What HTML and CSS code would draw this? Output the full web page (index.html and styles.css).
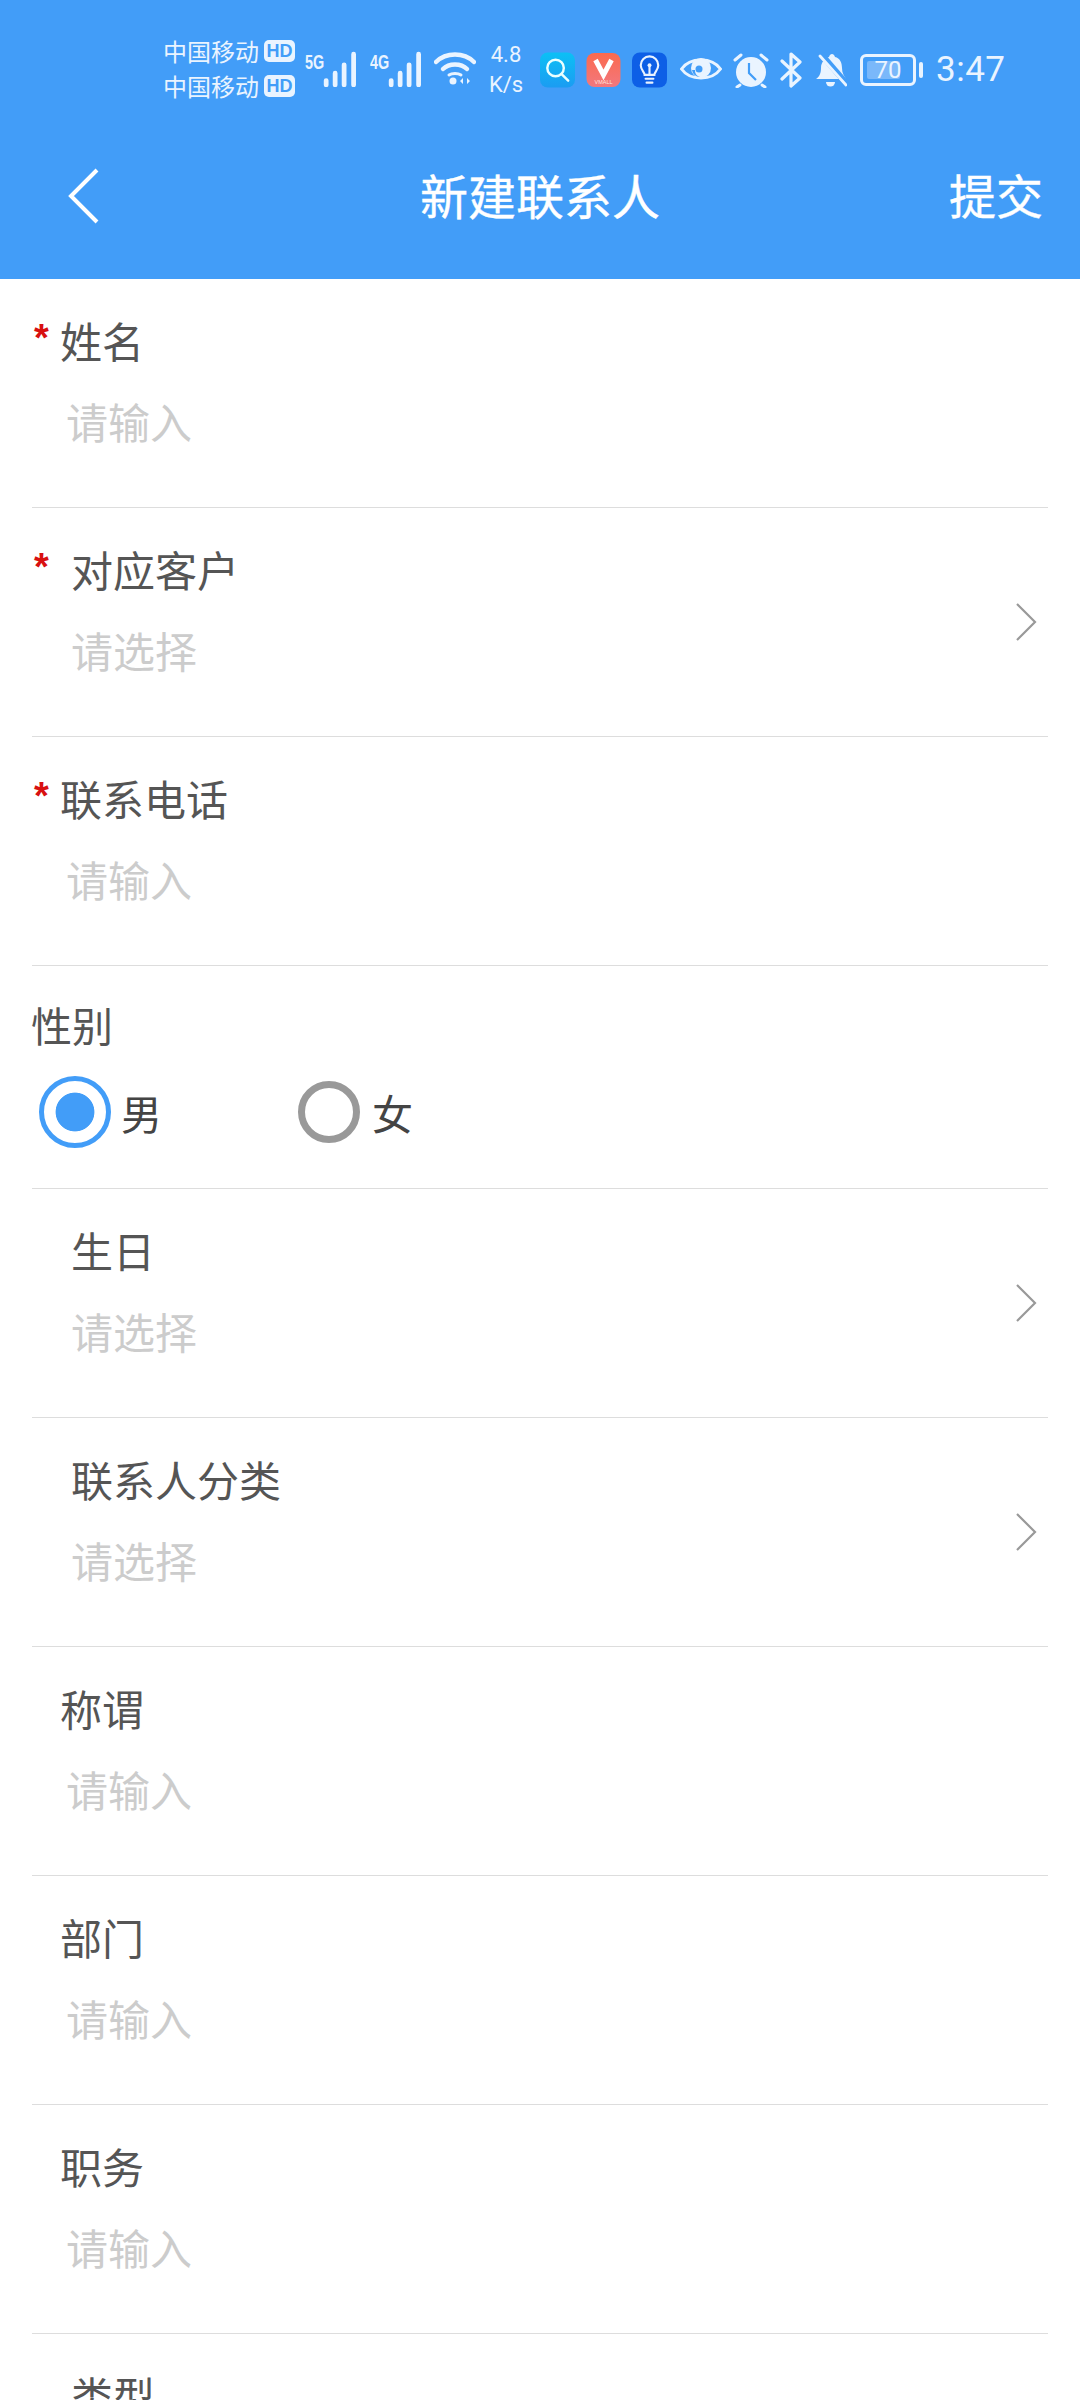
FILE: index.html
```html
<!DOCTYPE html>
<html lang="zh-CN">
<head>
<meta charset="utf-8">
<title>新建联系人</title>
<link rel="stylesheet" href="styles.css">
</head>
<body>
<div class="page">
  <header class="header">
    <div class="status">
      <div class="carriers">
        <div class="carrier"><span>中国移动</span><b class="hd">HD</b></div>
        <div class="carrier"><span>中国移动</span><b class="hd">HD</b></div>
      </div>
      <div class="signal">
        <span class="gen">5G</span>
        <svg class="bars" viewBox="0 0 36 34"><path d="M3 28v4M11.500 21v11M20 13v19M29 3v29" fill="none" stroke="#eaf4ff" stroke-width="4.500" stroke-linecap="round"/></svg>
      </div>
      <div class="signal two">
        <span class="gen">4G</span>
        <svg class="bars" viewBox="0 0 36 34"><path d="M3 28v4M11.500 21v11M20 13v19M29 3v29" fill="none" stroke="#eaf4ff" stroke-width="4.500" stroke-linecap="round"/></svg>
      </div>
      <svg class="wifi" viewBox="0 0 42 34"><g fill="none" stroke="#eaf4ff" stroke-width="4.500" stroke-linecap="round"><path d="M2 11C12 1 30 1 40 11"/><path d="M9 18C15 12 27 12 33 18"/><path d="M15 24c3-2 9-2 12 0" stroke-width="3"/></g><circle cx="19" cy="30" r="3.500" fill="#eaf4ff"/><path d="M29 27v6l-3-3zM33 27v6l3-3z" fill="#eaf4ff"/></svg>
      <div class="speed"><span>4.8</span><span>K/s</span></div>
      <svg class="app first" viewBox="0 0 36 36"><defs><linearGradient id="a1" x1="0" y1="0" x2="0" y2="1"><stop offset="0" stop-color="#0cc0f5"/><stop offset="1" stop-color="#1b9cf2"/></linearGradient></defs><rect width="36" height="36" rx="8" fill="url(#a1)"/><circle cx="16" cy="16" r="8.500" fill="none" stroke="#eaffff" stroke-width="2.500"/><path d="M22 22l7 7" stroke="#eaffff" stroke-width="2.500" stroke-linecap="round"/></svg>
      <svg class="app" viewBox="0 0 34 36"><defs><linearGradient id="a2" x1="0" y1="0" x2="0" y2="1"><stop offset="0" stop-color="#fb6a4e"/><stop offset="1" stop-color="#f2787e"/></linearGradient></defs><rect width="34" height="34" y="1" rx="8" fill="url(#a2)"/><path d="M9 8l8 15 8-15" fill="none" stroke="#fff" stroke-width="5"/><text class="vmall" x="17" y="32" text-anchor="middle">VMALL</text></svg>
      <svg class="app" viewBox="0 0 36 36"><rect width="36" height="36" rx="8" fill="#0d5fe6"/><path d="M13 23c0-3-4-5-4-10a9 9 0 0 1 18 0c0 5-4 7-4 10z" fill="none" stroke="#e8f2ff" stroke-width="2.200"/><path d="M14 27h8M15 31h6M18 23v-9" stroke="#e8f2ff" stroke-width="2.200" stroke-linecap="round"/><circle cx="18" cy="13" r="2" fill="#e8f2ff"/></svg>
      <svg class="eye" viewBox="0 0 42 28"><path d="M1.500 14C10 2 32 2 40.500 14 32 26 10 26 1.500 14z" fill="none" stroke="#eaf4ff" stroke-width="3"/><circle cx="21" cy="13" r="10" fill="#eaf4ff"/><path d="M12 15a8 8 0 0 0 8 7c-3-1-5-3-5-7z" fill="#429df8"/><circle cx="19" cy="14" r="3.500" fill="#429df8"/></svg>
      <svg class="alarm" viewBox="0 0 36 36"><circle cx="18" cy="20" r="15" fill="#eaf4ff"/><path d="M2 8l6-5M34 8l-6-5M7 33l-3 2M29 33l3 2" stroke="#eaf4ff" stroke-width="3" stroke-linecap="round"/><path d="M16 11v10l7 7" fill="none" stroke="#429df8" stroke-width="2.200"/></svg>
      <svg class="bt" viewBox="0 0 22 36"><path d="M2 9l18 17-9 8V2l9 8L2 27" fill="none" stroke="#eaf4ff" stroke-width="3.200" stroke-linejoin="round" stroke-linecap="round"/></svg>
      <svg class="bell" viewBox="0 0 32 36"><path d="M1 27c3-2 5-5 5-11 0-6 4-10 8-11 1-4 5-4 6 0 5 1 7 6 7 11 0 5 2 8 4 11z" fill="#eaf4ff"/><path d="M11 30h9a4.500 4.500 0 0 1-9 0z" fill="#eaf4ff"/><path d="M6 2l26 30" stroke="#429df8" stroke-width="6"/><path d="M5 4l26 29" stroke="#eaf4ff" stroke-width="2.800" stroke-linecap="round"/></svg>
      <div class="battery-wrap">
        <div class="battery"><i class="level"></i><span>70</span></div>
        <i class="cap"></i>
      </div>
      <div class="time">3:47</div>
    </div>
    <div class="nav">
      <svg class="back" viewBox="0 0 34 58"><path d="M30 3L4 29l26 26" fill="none" stroke="#fff" stroke-width="4"/></svg>
      <div class="title">新建联系人</div>
      <div class="submit">提交</div>
    </div>
  </header>
  <main class="form">
    <section class="row star-tight"><div class="label"><i class="req">*</i>姓名</div><div class="ph">请输入</div></section>
    <section class="row star-wide select"><div class="label"><i class="req">*</i>对应客户</div><div class="ph">请选择</div><svg class="chev" viewBox="0 0 22 40"><path d="M2 2l18 18L2 38" fill="none" stroke="#999" stroke-width="2.200"/></svg></section>
    <section class="row star-tight"><div class="label"><i class="req">*</i>联系电话</div><div class="ph">请输入</div></section>
    <section class="row gender">
      <div class="label">性别</div>
      <div class="radios">
        <div class="radio on"><i class="dot"></i><span>男</span></div>
        <div class="radio off"><i class="dot"></i><span>女</span></div>
      </div>
    </section>
    <section class="row select"><div class="label">生日</div><div class="ph">请选择</div><svg class="chev" viewBox="0 0 22 40"><path d="M2 2l18 18L2 38" fill="none" stroke="#999" stroke-width="2.200"/></svg></section>
    <section class="row select"><div class="label">联系人分类</div><div class="ph">请选择</div><svg class="chev" viewBox="0 0 22 40"><path d="M2 2l18 18L2 38" fill="none" stroke="#999" stroke-width="2.200"/></svg></section>
    <section class="row input"><div class="label">称谓</div><div class="ph">请输入</div></section>
    <section class="row input"><div class="label">部门</div><div class="ph">请输入</div></section>
    <section class="row input"><div class="label">职务</div><div class="ph">请输入</div></section>
    <section class="row select"><div class="label">类型</div></section>
  </main>
</div>
</body>
</html>
```
FILE: styles.css
```css
* { box-sizing: border-box; margin: 0; padding: 0; }
html, body { width: 1080px; height: 2400px; overflow: hidden; background: #fff; }
body { font-family: "Noto Sans CJK SC", "Noto Sans", sans-serif; }
.page { width: 1080px; height: 2400px; overflow: hidden; }
.header { height: 279px; background: #429df8; color: #fff; }
.status { height: 137px; padding-left: 163px; display: flex; align-items: center; color: #eaf4ff; }
.carriers { width: 132px; flex: none; display: flex; flex-direction: column; gap: 4px; margin-top: -1px; }
.carrier { display: flex; align-items: center; justify-content: space-between; height: 31px; font-size: 24px; line-height: 31px; white-space: nowrap; }
.hd { width: 31px; height: 22px; border-radius: 5px; background: #eaf4ff; color: #429df8; font: 700 18px/22px "Liberation Sans", sans-serif; text-align: center; }
.signal { display: flex; align-items: flex-end; width: 56px; height: 36px; margin-left: 10px; margin-top: 0; flex: none; }
.signal.two { margin-left: 9px; }
.gen { font: 700 20px/20px "Liberation Sans", sans-serif; color: #eaf4ff; align-self: flex-start; width: 18px; transform: scaleX(.72); transform-origin: left; margin-top: 1px; }
.bars { width: 38px; height: 36px; flex: none; }
.wifi { width: 42px; height: 34px; margin-left: 8px; margin-top: -2px; flex: none; }
.speed { width: 52px; margin-left: 4px; flex: none; display: flex; flex-direction: column; align-items: center; font-size: 22px; line-height: 30px; font-family: "Roboto", sans-serif; color: #eaf4ff; margin-top: 2px; }
.app { width: 35px; height: 36px; margin-left: 11px; margin-top: 2px; flex: none; }
.app.first { margin-left: 8px; }
.vmall { font: 5.500px "Liberation Sans", sans-serif; fill: #ffe3de; }
.eye { width: 42px; height: 28px; margin-left: 13px; margin-top: 1px; flex: none; }
.alarm { width: 36px; height: 36px; margin-left: 11px; margin-top: 2px; flex: none; }
.bt { width: 22px; height: 36px; margin-left: 11px; margin-top: 2px; flex: none; }
.bell { width: 32px; height: 36px; margin-left: 13px; margin-top: 2px; flex: none; }
.battery-wrap { display: flex; align-items: center; gap: 3px; margin-left: 13px; margin-top: 2px; flex: none; }
.battery { position: relative; width: 56px; height: 32px; border: 3px solid #eaf4ff; border-radius: 6px; display: flex; align-items: center; justify-content: center; font: 24px/26px "Roboto", sans-serif; color: #eaf4ff; }
.battery span { position: relative; }
.level { position: absolute; left: 4px; top: 4px; bottom: 4px; width: 33px; background: #7ab8fa; border-radius: 2px; }
.cap { width: 4px; height: 16px; background: #eaf4ff; border-radius: 2px; }
.time { margin-left: 13px; margin-top: 2px; font: 35px/40px "Roboto", sans-serif; color: #eaf4ff; letter-spacing: .5px; white-space: nowrap; }
.nav { height: 142px; display: grid; grid-template-columns: 1fr auto 1fr; align-items: start; padding: 0 37px; }
.back { width: 34px; height: 58px; margin-top: 30px; margin-left: 30px; }
.title { font-size: 48px; line-height: 60px; font-weight: 400; margin-top: 27px; -webkit-text-stroke: .4px #fff; }
.submit { font-size: 47px; line-height: 60px; font-weight: 400; margin-top: 27px; justify-self: end; -webkit-text-stroke: .4px #fff; }
.form { padding: 0 32px; }
.row { position: relative; height: 229px; border-bottom: 1.500px solid #ddd; padding-top: 33px; }
.row.gender { height: 223px; padding-top: 30px; }
.row.gender .label { font-size: 41px; margin-left: -1px; }
.row.select, .row.star-wide { padding-left: 39px; }
.row.input { padding-left: 28px; }
.row.star-tight { padding-left: 28px; }
.label { position: relative; font-size: 42px; line-height: 56px; color: #555; white-space: nowrap; }
.ph { font-size: 42px; line-height: 56px; color: #ccc; margin-top: 25px; margin-left: 6px; white-space: nowrap; }
.select .ph, .star-wide .ph { margin-left: 0; }
.req { position: absolute; left: -26px; top: 1px; font: 700 38px/50px "Liberation Sans", sans-serif; color: #d81010; }
.star-wide .req { left: -37px; }
.chev { position: absolute; right: 11px; top: 94px; width: 22px; height: 40px; }
.radios { display: flex; align-items: center; margin-top: 24px; }
.radio { display: flex; align-items: center; font-size: 41px; color: #444; line-height: 56px; }
.radio.on { width: 266px; padding-left: 7px; gap: 10px; }
.radio.off { gap: 12px; }
.dot { display: block; border-radius: 50%; flex: none; }
.on .dot { width: 72px; height: 72px; border: 5px solid #429df8; background: radial-gradient(circle, #429df8 19px, #fff 19.800px); }
.off .dot { width: 62px; height: 62px; border: 7px solid #999; }
```
